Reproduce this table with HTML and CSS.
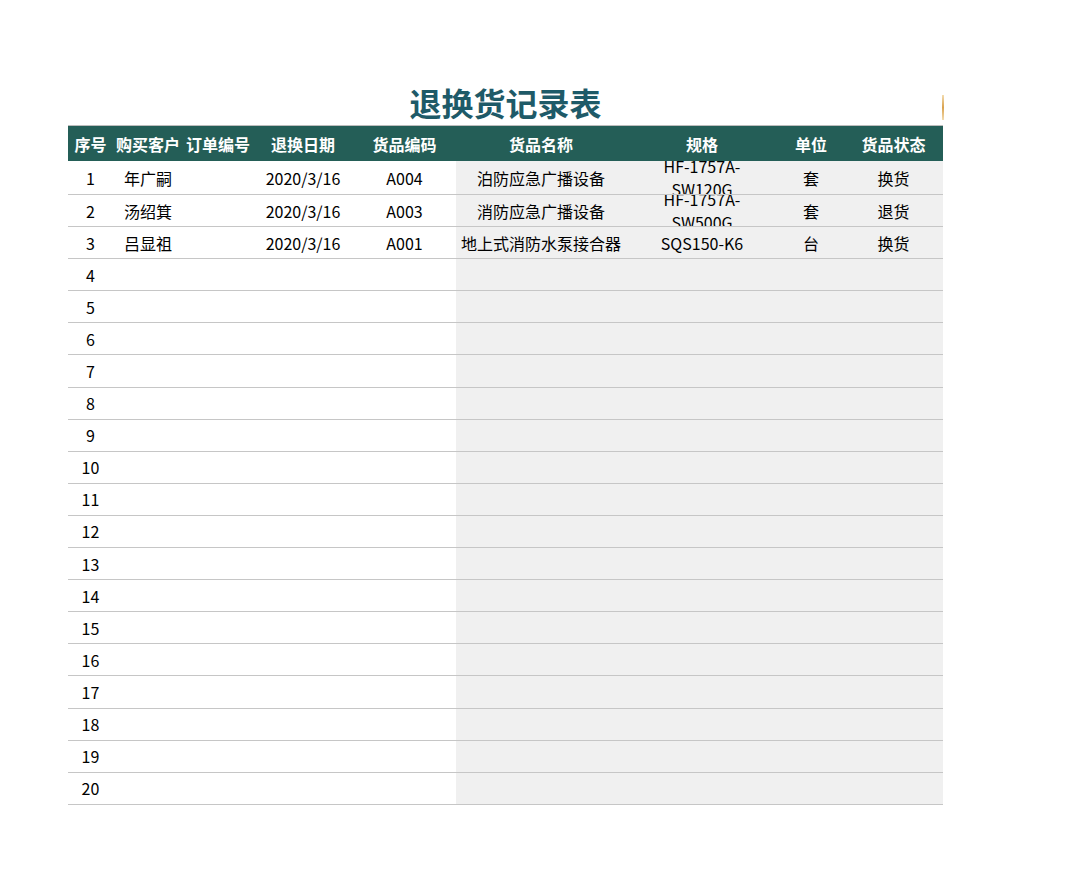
FILE: index.html
```html
<!DOCTYPE html>
<html lang="zh-CN">
<head>
<meta charset="utf-8">
<title>退换货记录表</title>
<link rel="stylesheet" href="styles.css">
</head>
<body>
<div class="sheet">
  <div class="title"><h1>退换货记录表</h1></div>
  <div class="grid">
    <div class="row head">
      <div class="c">序号</div><div class="c">购买客户</div><div class="c">订单编号</div><div class="c">退换日期</div><div class="c">货品编码</div><div class="c">货品名称</div><div class="c">规格</div><div class="c">单位</div><div class="c">货品状态</div>
    </div>
    <div class="row first">
      <div class="c">1</div><div class="c">年广嗣</div><div class="c"></div><div class="c">2020/3/16</div><div class="c">A004</div><div class="c g">泊防应急广播设备</div><div class="c g wrap">HF-1757A-<br>SW120G</div><div class="c g">套</div><div class="c g">换货</div>
    </div>
    <div class="row">
      <div class="c">2</div><div class="c">汤绍箕</div><div class="c"></div><div class="c">2020/3/16</div><div class="c">A003</div><div class="c g">消防应急广播设备</div><div class="c g wrap">HF-1757A-<br>SW500G</div><div class="c g">套</div><div class="c g">退货</div>
    </div>
    <div class="row">
      <div class="c">3</div><div class="c">吕显祖</div><div class="c"></div><div class="c">2020/3/16</div><div class="c">A001</div><div class="c g">地上式消防水泵接合器</div><div class="c g">SQS150-K6</div><div class="c g">台</div><div class="c g">换货</div>
    </div>
    <div class="row"><div class="c">4</div><div class="c"></div><div class="c"></div><div class="c"></div><div class="c"></div><div class="c g"></div><div class="c g"></div><div class="c g"></div><div class="c g"></div></div>
    <div class="row"><div class="c">5</div><div class="c"></div><div class="c"></div><div class="c"></div><div class="c"></div><div class="c g"></div><div class="c g"></div><div class="c g"></div><div class="c g"></div></div>
    <div class="row"><div class="c">6</div><div class="c"></div><div class="c"></div><div class="c"></div><div class="c"></div><div class="c g"></div><div class="c g"></div><div class="c g"></div><div class="c g"></div></div>
    <div class="row"><div class="c">7</div><div class="c"></div><div class="c"></div><div class="c"></div><div class="c"></div><div class="c g"></div><div class="c g"></div><div class="c g"></div><div class="c g"></div></div>
    <div class="row"><div class="c">8</div><div class="c"></div><div class="c"></div><div class="c"></div><div class="c"></div><div class="c g"></div><div class="c g"></div><div class="c g"></div><div class="c g"></div></div>
    <div class="row"><div class="c">9</div><div class="c"></div><div class="c"></div><div class="c"></div><div class="c"></div><div class="c g"></div><div class="c g"></div><div class="c g"></div><div class="c g"></div></div>
    <div class="row"><div class="c">10</div><div class="c"></div><div class="c"></div><div class="c"></div><div class="c"></div><div class="c g"></div><div class="c g"></div><div class="c g"></div><div class="c g"></div></div>
    <div class="row"><div class="c">11</div><div class="c"></div><div class="c"></div><div class="c"></div><div class="c"></div><div class="c g"></div><div class="c g"></div><div class="c g"></div><div class="c g"></div></div>
    <div class="row"><div class="c">12</div><div class="c"></div><div class="c"></div><div class="c"></div><div class="c"></div><div class="c g"></div><div class="c g"></div><div class="c g"></div><div class="c g"></div></div>
    <div class="row"><div class="c">13</div><div class="c"></div><div class="c"></div><div class="c"></div><div class="c"></div><div class="c g"></div><div class="c g"></div><div class="c g"></div><div class="c g"></div></div>
    <div class="row"><div class="c">14</div><div class="c"></div><div class="c"></div><div class="c"></div><div class="c"></div><div class="c g"></div><div class="c g"></div><div class="c g"></div><div class="c g"></div></div>
    <div class="row"><div class="c">15</div><div class="c"></div><div class="c"></div><div class="c"></div><div class="c"></div><div class="c g"></div><div class="c g"></div><div class="c g"></div><div class="c g"></div></div>
    <div class="row"><div class="c">16</div><div class="c"></div><div class="c"></div><div class="c"></div><div class="c"></div><div class="c g"></div><div class="c g"></div><div class="c g"></div><div class="c g"></div></div>
    <div class="row"><div class="c">17</div><div class="c"></div><div class="c"></div><div class="c"></div><div class="c"></div><div class="c g"></div><div class="c g"></div><div class="c g"></div><div class="c g"></div></div>
    <div class="row"><div class="c">18</div><div class="c"></div><div class="c"></div><div class="c"></div><div class="c"></div><div class="c g"></div><div class="c g"></div><div class="c g"></div><div class="c g"></div></div>
    <div class="row"><div class="c">19</div><div class="c"></div><div class="c"></div><div class="c"></div><div class="c"></div><div class="c g"></div><div class="c g"></div><div class="c g"></div><div class="c g"></div></div>
    <div class="row"><div class="c">20</div><div class="c"></div><div class="c"></div><div class="c"></div><div class="c"></div><div class="c g"></div><div class="c g"></div><div class="c g"></div><div class="c g"></div></div>
  </div>
</div>
</body>
</html>
```
FILE: styles.css
```css
html, body {
  margin: 0;
  padding: 0;
  background: #ffffff;
}
body {
  font-family: "Noto Sans CJK SC", "Noto Sans", sans-serif;
  color: #000000;
}
.sheet {
  margin-left: 68px;
  width: 875px;
}
.title {
  position: relative;
  height: 125px;
  box-sizing: border-box;
  padding-top: 82px;
  text-align: center;
}
.title::after {
  content: "";
  position: absolute;
  right: -1px;
  top: 95px;
  width: 2px;
  height: 25px;
  background: linear-gradient(#f3dcb0, #d9a24e, #f3dcb0);
}
.title h1 {
  margin: 0;
  font-size: 32px;
  line-height: 40px;
  font-weight: 700;
  color: #1e5a68;
}
.row {
  display: grid;
  grid-template-columns: 45px 70px 70px 100px 103px 170px 152px 66px 99px;
  height: 32.1px;
  box-sizing: border-box;
  border-bottom: 1px solid #c6c6c6;
}
.row.first {
  height: 34px;
}
.row.head {
  height: 36px;
  border-top: 1px solid #bdbdbd;
  border-bottom: none;
  background: #245e57;
  color: #ffffff;
  font-weight: 700;
}
.c {
  display: flex;
  align-items: center;
  justify-content: center;
  overflow: hidden;
  font-size: 16px;
  line-height: 22px;
  white-space: nowrap;
  text-align: center;
}
.g {
  background: #f0f0f0;
}
.wrap {
  line-height: 23px;
}
```
